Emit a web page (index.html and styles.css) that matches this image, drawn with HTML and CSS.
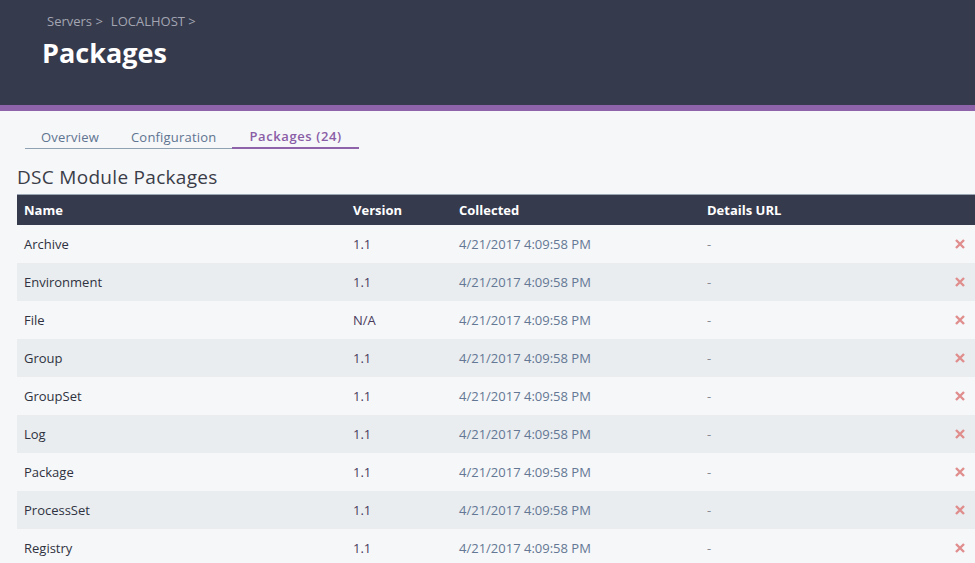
FILE: index.html
```html
<!DOCTYPE html>
<html>
<head>
<meta charset="utf-8">
<link rel="stylesheet" href="styles.css">
</head>
<body>
<header class="top">
  <div class="crumbs"><span>Servers &gt;</span><span>LOCALHOST &gt;</span></div>
  <h1 class="title">Packages</h1>
</header>
<div class="stripe"></div>
<main class="content">
  <nav class="tabs">
    <a class="tab">Overview</a>
    <a class="tab">Configuration</a>
    <a class="tab active">Packages (24)</a>
  </nav>
  <h2 class="section">DSC Module Packages</h2>
  <table class="grid">
    <thead>
      <tr><th class="c-name">Name</th><th class="c-ver">Version</th><th class="c-col">Collected</th><th class="c-url">Details URL</th><th class="c-x"></th></tr>
    </thead>
    <tbody>
      <tr><td>Archive</td><td class="ver">1.1</td><td class="date">4/21/2017 4:09:58 PM</td><td class="dash">-</td><td class="x"><svg class="xi" viewBox="0 0 12 12"><path d="M2 2L10 10M10 2L2 10"/></svg></td></tr>
      <tr><td>Environment</td><td class="ver">1.1</td><td class="date">4/21/2017 4:09:58 PM</td><td class="dash">-</td><td class="x"><svg class="xi" viewBox="0 0 12 12"><path d="M2 2L10 10M10 2L2 10"/></svg></td></tr>
      <tr><td>File</td><td class="ver">N/A</td><td class="date">4/21/2017 4:09:58 PM</td><td class="dash">-</td><td class="x"><svg class="xi" viewBox="0 0 12 12"><path d="M2 2L10 10M10 2L2 10"/></svg></td></tr>
      <tr><td>Group</td><td class="ver">1.1</td><td class="date">4/21/2017 4:09:58 PM</td><td class="dash">-</td><td class="x"><svg class="xi" viewBox="0 0 12 12"><path d="M2 2L10 10M10 2L2 10"/></svg></td></tr>
      <tr><td>GroupSet</td><td class="ver">1.1</td><td class="date">4/21/2017 4:09:58 PM</td><td class="dash">-</td><td class="x"><svg class="xi" viewBox="0 0 12 12"><path d="M2 2L10 10M10 2L2 10"/></svg></td></tr>
      <tr><td>Log</td><td class="ver">1.1</td><td class="date">4/21/2017 4:09:58 PM</td><td class="dash">-</td><td class="x"><svg class="xi" viewBox="0 0 12 12"><path d="M2 2L10 10M10 2L2 10"/></svg></td></tr>
      <tr><td>Package</td><td class="ver">1.1</td><td class="date">4/21/2017 4:09:58 PM</td><td class="dash">-</td><td class="x"><svg class="xi" viewBox="0 0 12 12"><path d="M2 2L10 10M10 2L2 10"/></svg></td></tr>
      <tr><td>ProcessSet</td><td class="ver">1.1</td><td class="date">4/21/2017 4:09:58 PM</td><td class="dash">-</td><td class="x"><svg class="xi" viewBox="0 0 12 12"><path d="M2 2L10 10M10 2L2 10"/></svg></td></tr>
      <tr><td>Registry</td><td class="ver">1.1</td><td class="date">4/21/2017 4:09:58 PM</td><td class="dash">-</td><td class="x"><svg class="xi" viewBox="0 0 12 12"><path d="M2 2L10 10M10 2L2 10"/></svg></td></tr>
    </tbody>
  </table>
</main>
</body>
</html>
```

FILE: styles.css
```css
html, body {
  margin: 0;
  padding: 0;
  background: #f6f7f9;
  font-family: "Open Sans", "Liberation Sans", sans-serif;
  overflow: hidden;
}
.top {
  background: #363a4d;
  height: 105px;
  box-sizing: border-box;
  padding: 12px 0 0 42px;
}
.crumbs {
  display: flex;
  gap: 8px;
  padding-left: 5px;
  font-size: 13px;
  color: #a3a6b2;
  line-height: 18px;
}
.title {
  margin: 6px 0 0 0;
  font-size: 27px;
  font-weight: 700;
  color: #ffffff;
  line-height: 34px;
}
.stripe {
  height: 6px;
  background: #8f63a9;
}
.content {
  padding: 16px 0 0 17px;
}
.tabs {
  display: flex;
  margin-left: 8px;
  height: 22px;
}
.tab {
  font-size: 13px;
  color: #5e7490;
  padding: 0 16px;
  border-bottom: 1px solid #8fa2b4;
  line-height: 20px;
  letter-spacing: 0.2px;
}
.tab.active {
  color: #8a5ea6;
  font-weight: 600;
  padding: 0 17px;
  letter-spacing: 0.6px;
  border-bottom: 2px solid #8f63a9;
  line-height: 19px;
}
.section {
  margin: 16px 0 5px 0;
  font-size: 19px;
  font-weight: 400;
  letter-spacing: 0.3px;
  color: #3a3d48;
  line-height: 24px;
}
.grid {
  width: 958px;
  border-collapse: collapse;
  font-size: 13px;
}
.grid thead tr {
  background: #363a4d;
  border-top: 1px solid #9aa5b3;
}
.grid th {
  color: #ffffff;
  font-weight: 700;
  text-align: left;
  height: 30px;
  padding: 0 7px;
}
.c-name { width: 315px; }
.c-ver { width: 92px; }
.c-col { width: 234px; }
.c-url { width: 220px; }
.grid td {
  height: 38px;
  padding: 0 7px;
  color: #2f3240;
}
.grid tbody tr:nth-child(even) {
  background: #e9edf0;
}
.grid td.ver { color: #4a3b5c; }
.grid td.date { color: #647794; }
.grid td.dash { color: #888b96; }
.grid td.x {
  text-align: right;
  padding-right: 9px;
  line-height: 0;
}
.xi {
  width: 12px;
  height: 12px;
  fill: none;
  stroke: #e08d8d;
  stroke-width: 2.4;
}
```
